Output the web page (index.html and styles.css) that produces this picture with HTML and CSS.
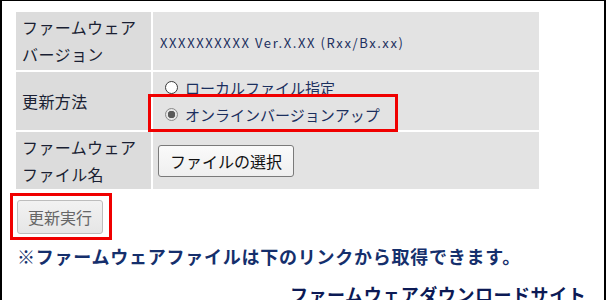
FILE: index.html
```html
<!DOCTYPE html>
<html lang="ja">
<head>
  <meta charset="UTF-8" />
  <title>ファームウェア更新</title>
  <link rel="stylesheet" href="styles.css">
</head>
<body>
  <div class="frame">
    <table class="fw-table">
      <tr class="row-version">
        <th>ファームウェア<br>バージョン</th>
        <td><span class="version">XXXXXXXXXX Ver.X.XX (Rxx/Bx.xx)</span></td>
      </tr>
      <tr class="row-method">
        <th>更新方法</th>
        <td>
          <label class="choice"><input type="radio" name="method"> ローカルファイル指定</label>
          <label class="choice marked"><input type="radio" name="method" checked> オンラインバージョンアップ</label>
        </td>
      </tr>
      <tr class="row-file">
        <th>ファームウェア<br>ファイル名</th>
        <td><button type="button" class="file-btn">ファイルの選択</button></td>
      </tr>
    </table>

    <div class="actions">
      <span class="marked-btn"><button type="button" class="run-btn">更新実行</button></span>
    </div>

    <p class="notice">※ファームウェアファイルは下のリンクから取得できます。</p>
    <p class="download"><a href="#">ファームウェアダウンロードサイト</a></p>
  </div>
</body>
</html>
```

FILE: styles.css
```css
:root {
  --navy: #1b2f5e;
  --label-bg: #dcdcdc;
  --value-bg: #e3e3e3;
  --mark: #f00000;
}

body {
  margin: 0;
  background: #ffffff;
  font-family: "Noto Sans CJK JP", "Noto Sans", sans-serif;
  color: #1a1f33;
}

.frame {
  height: 300px;
  box-sizing: border-box;
  border-left: 2px solid #000;
  border-top: 1px solid #000;
  border-right: 2px solid #000;
  padding: 9px 0 0 12px;
  overflow: hidden;
}

.fw-table {
  border-collapse: separate;
  border-spacing: 2px;
  width: 527px;
  table-layout: fixed;
}

.fw-table th {
  width: 129px;
  background: var(--label-bg);
  font-weight: normal;
  font-size: 16px;
  letter-spacing: 0.4px;
  line-height: 27px;
  text-align: left;
  padding: 0 0 0 6px;
  color: #1a1f33;
}

.fw-table td {
  background: var(--value-bg);
  padding: 0 5px;
}

.row-version th,
.row-version td { height: 58px; }

.row-method th,
.row-method td { height: 58px; }

.row-file th,
.row-file td { height: 57px; }

.version {
  padding-left: 2px;
  font-size: 13px;
  letter-spacing: 1.6px;
  color: var(--navy);
}

.choice {
  display: flex;
  align-items: center;
  width: max-content;
  font-size: 15px;
  line-height: 27px;
  color: var(--navy);
}

.choice input {
  appearance: none;
  width: 13px;
  height: 13px;
  margin: 0 7px 0 7px;
  border: 1px solid #3a3a3a;
  border-radius: 50%;
  background: #fff;
  box-sizing: border-box;
}

.choice input:checked {
  border-color: #8a8a8a;
  background: radial-gradient(circle, #5a5a5a 0 3.5px, #e6e6e6 4px);
}

.marked {
  position: relative;
}

.marked::after {
  content: "";
  position: absolute;
  left: -10px;
  right: -18px;
  top: -7px;
  bottom: -4px;
  border: 3px solid var(--mark);
}

.file-btn {
  font-family: inherit;
  font-size: 16px;
  color: #111;
  width: 136px;
  height: 32px;
  padding: 0;
  background: linear-gradient(#fafafa, #efefef);
  border: 1px solid #7a7a7a;
  border-radius: 3px;
}

.actions {
  padding: 9px 0 0 3px;
}

.marked-btn {
  position: relative;
  display: inline-block;
  vertical-align: top;
}

.marked-btn::after {
  content: "";
  position: absolute;
  left: -7px;
  right: -9px;
  top: -7px;
  bottom: -6px;
  border: 3px solid var(--mark);
}

.run-btn {
  display: block;
  font-family: inherit;
  font-size: 16px;
  color: #666;
  width: 86px;
  height: 34px;
  padding: 0;
  background: linear-gradient(#f2f2f2, #e6e6e6);
  border: 1px solid #bdbdbd;
  border-radius: 3px;
}

.notice {
  margin: 9px 0 0 3px;
  font-size: 18px;
  font-weight: bold;
  letter-spacing: 0.75px;
  line-height: 26px;
  color: #152f6c;
}

.download {
  margin: 12px 0 0 276px;
  font-size: 18px;
  font-weight: bold;
  letter-spacing: 0.55px;
  line-height: 26px;
  white-space: nowrap;
}

.download a {
  color: #0c1a55;
  text-decoration: none;
}
```
